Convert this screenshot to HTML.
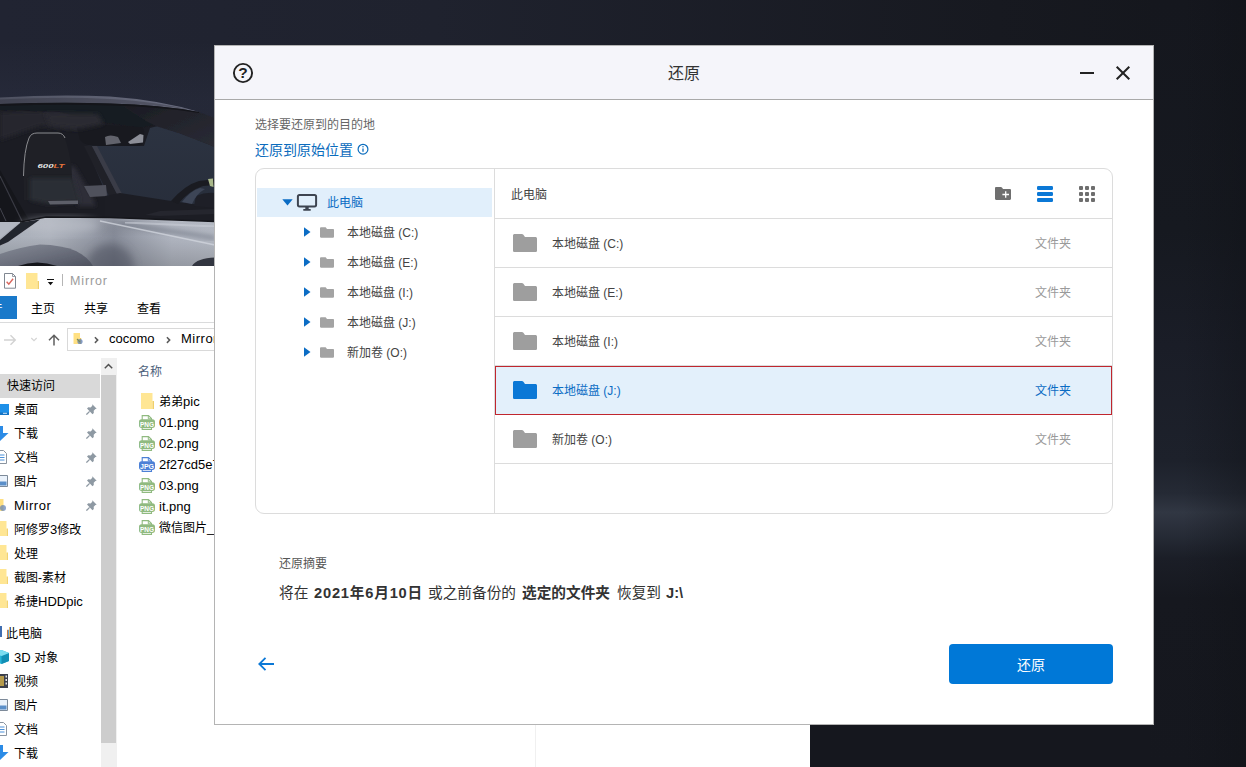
<!DOCTYPE html>
<html lang="zh-CN">
<head>
<meta charset="utf-8">
<title>还原</title>
<style>
*{box-sizing:border-box;margin:0;padding:0}
html,body{width:1246px;height:767px;overflow:hidden;background:#1b1e29}
body{position:relative;font-family:"Liberation Sans","Noto Sans CJK SC",sans-serif;color:#333}
.abs{position:absolute}
#bg{position:absolute;left:0;top:0;width:1246px;height:767px}
/* explorer */
#exp{position:absolute;left:0;top:266px;width:810px;height:501px;background:#fff;font-size:13px;color:#000}
#exp .t{position:absolute;white-space:nowrap;line-height:16px}
/* dialog */
#dlg{position:absolute;left:214px;top:45px;width:940px;height:680px;background:#fff}
#dlg::after{content:"";position:absolute;left:0;top:0;width:940px;height:680px;border:1px solid #b4b4b4;box-sizing:border-box;pointer-events:none}
#hdr{position:absolute;left:0;top:0;width:940px;height:55px;background:#f5f5fa;border-bottom:1px solid #a9a9a9}
#dlg .t{position:absolute;white-space:nowrap}
#panel{position:absolute;left:41px;top:123px;width:858px;height:346px;border:1px solid #dcdcdc;border-radius:9px;background:#fff;overflow:hidden}
#tree{position:absolute;left:0;top:0;width:239px;height:344px;border-right:1px solid #dcdcdc}
#list{position:absolute;left:239px;top:0;width:617px;height:344px}
.row{position:absolute;left:0;width:617px;height:49px;border-bottom:1px solid #dcdcdc}
.row .n{position:absolute;left:57px;top:17px;font-size:12px;line-height:16px;color:#444}
.row .k{position:absolute;left:540px;top:17px;font-size:12px;line-height:16px;color:#9a9a9a}
.row svg{position:absolute}
.row span svg,.tr span svg{display:block}
.tr{position:absolute;left:0;width:238px;height:30px}
.tr .n{position:absolute;left:91px;top:8px;font-size:12px;line-height:16px;color:#444;white-space:nowrap}
</style>
</head>
<body>
<svg id="bg" viewBox="0 0 1246 767">
<defs>
 <linearGradient id="gsky" x1="0" y1="0" x2="1" y2="0"><stop offset="0" stop-color="#212432"/><stop offset=".35" stop-color="#1f222e"/><stop offset=".8" stop-color="#171920"/><stop offset="1" stop-color="#14161c"/></linearGradient>
 <linearGradient id="gright" x1="0" y1="0" x2="0" y2="1"><stop offset="0" stop-color="#15171e"/><stop offset=".3" stop-color="#161920"/><stop offset=".45" stop-color="#1a1d27"/><stop offset=".6" stop-color="#1d212b"/><stop offset=".643" stop-color="#252a35"/><stop offset=".668" stop-color="#313743"/><stop offset=".698" stop-color="#262b36"/><stop offset=".728" stop-color="#1b1e27"/><stop offset=".78" stop-color="#16181f"/><stop offset="1" stop-color="#15171e"/></linearGradient>
 <linearGradient id="gskyv" x1="0" y1="0" x2="0" y2="1"><stop offset="0" stop-color="#8090c0" stop-opacity="0"/><stop offset=".15" stop-color="#8090c0" stop-opacity="0"/><stop offset=".38" stop-color="#8090c0" stop-opacity=".05"/><stop offset="1" stop-color="#8090c0" stop-opacity=".05"/></linearGradient>
 <linearGradient id="gredge" x1="0" y1="0" x2="1" y2="0"><stop offset="0" stop-color="#0f1116" stop-opacity="0"/><stop offset=".35" stop-color="#0f1116" stop-opacity="0"/><stop offset="1" stop-color="#0f1116" stop-opacity=".4"/></linearGradient>
 <linearGradient id="gbody" x1="0" y1="0" x2="1" y2="0"><stop offset="0" stop-color="#aab0ba"/><stop offset=".23" stop-color="#adb2bc"/><stop offset=".42" stop-color="#969ba7"/><stop offset=".53" stop-color="#868b98"/><stop offset=".64" stop-color="#9a9fab"/><stop offset=".8" stop-color="#b0b5c0"/><stop offset="1" stop-color="#b5bac4"/></linearGradient>
 <linearGradient id="gflare" x1="0" y1="0" x2="1" y2="1"><stop offset="0" stop-color="#858a96"/><stop offset=".5" stop-color="#6b6f7c"/><stop offset="1" stop-color="#4e525f"/></linearGradient>
 <linearGradient id="gbodyv" x1="0" y1="0" x2="0" y2="1"><stop offset="0" stop-color="#fff" stop-opacity=".1"/><stop offset=".4" stop-color="#000" stop-opacity="0"/><stop offset="1" stop-color="#000" stop-opacity=".16"/></linearGradient>
 <linearGradient id="groof" x1="0" y1="0" x2="1" y2="0"><stop offset="0" stop-color="#4e5160"/><stop offset=".5" stop-color="#5e6172"/><stop offset="1" stop-color="#6e7184"/></linearGradient>
 <linearGradient id="gpillar" x1="0" y1="0" x2="1" y2="1"><stop offset="0" stop-color="#1a1b22"/><stop offset=".5" stop-color="#23242c"/><stop offset="1" stop-color="#2a2b34"/></linearGradient>
 <linearGradient id="gglass" x1="0" y1="0" x2="0" y2="1"><stop offset="0" stop-color="#2c3341"/><stop offset="1" stop-color="#272d3a"/></linearGradient>
 <filter id="b1" x="-10%" y="-10%" width="120%" height="120%"><feGaussianBlur stdDeviation=".7"/></filter>
 <filter id="b2" x="-20%" y="-20%" width="140%" height="140%"><feGaussianBlur stdDeviation="2"/></filter>
 <filter id="b4" x="-30%" y="-30%" width="160%" height="160%"><feGaussianBlur stdDeviation="4"/></filter>
 <clipPath id="ccar"><rect x="0" y="0" width="215" height="266"/></clipPath>
</defs>
<rect width="1246" height="767" fill="url(#gsky)"/>
<rect x="1150" y="0" width="96" height="767" fill="url(#gright)"/>
<rect x="1150" y="0" width="96" height="767" fill="url(#gredge)"/>
<rect x="800" y="720" width="350" height="47" fill="#15171e"/>
<g clip-path="url(#ccar)">
 <!-- sky behind car -->
 <rect x="0" y="0" width="215" height="266" fill="url(#gskyv)"/>
 <!-- cabin dark mass -->
 <path d="M0 100 L110 100 L160 104 L200 113 L215 119 L215 230 L0 230Z" fill="#1b1c23"/>
 <!-- windshield glass -->
 <path d="M86 146 L100 145 L144 146 L150 128 L158 126 L182 134 L215 147 L215 222 L118 222 Z" fill="url(#gglass)"/>
 <!-- interior lighter patches -->
 <path d="M0 112 L60 110 L90 118 L78 130 L40 126 L0 140Z" fill="#25262e" filter="url(#b2)"/>
 <!-- roof liner dark -->
 <path d="M0 103 L110 103 L150 106 L175 112 L160 124 L140 128 L100 122 L60 112 L0 110Z" fill="#191a20" filter="url(#b1)"/>
 <!-- pillar / roof frame -->
 <path d="M120 104 L150 105 L180 108.500 L199 112 L215 118 L215 147 L180 133.500 L157 126.500 L146 121 Z" fill="url(#gpillar)" filter="url(#b1)"/>
 <!-- roof highlight band -->
 <path d="M0 97.500 Q60 94 110 96.500 Q160 100 199 112 Q160 104.500 110 103.500 Q60 102 0 104Z" fill="url(#groof)"/>
 <path d="M0 99.500 Q60 96.500 110 99 Q160 102 190 110 Q160 104.500 110 103.500 Q60 102 0 104Z" fill="#23242d" opacity=".3" filter="url(#b1)"/>
 <path d="M0 104 Q60 102 110 103.500 Q160 104.500 199 112 L199 113 Q160 106.500 110 105.500 Q60 104 0 106Z" fill="#14151a"/>
 <!-- mirror -->
 <path d="M77 128 Q78 124 84 124 L140 127 Q145 128 144 134 L143 143 Q142 146 137 146 L100 146 Q84 146 80 140Z" fill="#18191f"/>
 <path d="M105 137 Q110 134 118 137 L121 143 L106 145Z" fill="#62646c" filter="url(#b1)"/>
 <path d="M128 142 L140 134 L143.500 135 L143 142.500 L130 144Z" fill="#8d8f98" filter="url(#b1)"/>
 <!-- mirror stalk / A pillar inner -->
 <path d="M84 146 L92 146 L118 196 L110 198Z" fill="#202128"/>
 <path d="M92 146 L97 146 L122 194 L118 196Z" fill="#3a3c47"/>
 <path d="M45 113 L98 114 L104 124 L80 129 L50 126Z" fill="#2a2b33" filter="url(#b2)"/>
 <path d="M64 168 L74 166 L92 196 L96 206 L78 206 Z" fill="#2e2f38" filter="url(#b2)"/>
 <!-- headrest -->
 <path d="M24 200 L23.500 172 Q24 150 29 138 Q31 133 37 133 L58 133 Q63 133 65 138 Q72 160 72 178 L78 205 Z" fill="#1f2026"/>
 <path d="M23.500 176 Q24 150 29 138 Q31 133 37 133 L58 133 Q63 133 65 138" fill="none" stroke="#8b8c90" stroke-width="1"/>
 <!-- seat lower -->
 <path d="M30 178 L73 178 L80 202 L48 204 L30 200Z" fill="#2c2d36" filter="url(#b2)"/>
 <path d="M48 201 L78 200.500 L78 204 L50 204.500Z" fill="#5d5e69" filter="url(#b1)"/>
 <path d="M84 186 L106 185 L107 196 L90 197Z" fill="#50515c" filter="url(#b1)"/>
 <!-- left door dark + lines -->
 <path d="M0 170 L0 222 L30 222 Z" fill="#15161b"/>
 <path d="M0 176 L22 221" stroke="#3a3b44" stroke-width="1.200"/>
 <path d="M0 208 L6 221" stroke="#44454e" stroke-width="1"/>
 <!-- dashboard -->
 <path d="M105 196 L120 193 L171 201 L215 207 L215 222 L105 218Z" fill="#1c1d24"/>
 <path d="M171 201 Q185 185 199 181 L212 179.500 L215 180 L215 185 L203 186 Q190 190 178 204Z" fill="#1a1b21"/>
 <path d="M196 196 Q205 192 215 193 L215 208 L194 206Z" fill="#1e1f27"/>
 <path d="M182 202 Q190 191 200 188 L205 189 Q196 194 192 204Z" fill="#3d4556" filter="url(#b1)"/>
 <path d="M208 179 L213 178.500 L213.500 187 L210 186Z" fill="#a9b88a" filter="url(#b1)"/>
 <path d="M145 215 L160 211 L215 209 L215 214 L160 216Z" fill="#25262e"/>
 <!-- body -->
 <path d="M0 222 L20 222 L46 217 L110 217.500 L215 221.500 L215 266 L0 266Z" fill="url(#gbody)"/>
 <path d="M0 222 L20 222 L46 217 L110 217.500 L215 221.500 L215 266 L0 266Z" fill="url(#gbodyv)"/>
 <ellipse cx="110" cy="268" rx="24" ry="24" fill="#4a4e5b" opacity=".5" filter="url(#b4)"/>
 <ellipse cx="60" cy="226" rx="40" ry="8" fill="#c3c7d0" opacity=".55" filter="url(#b4)"/>
 <!-- bright left corner -->
 <path d="M0 222 L20 222 L0 238Z" fill="#b3b8c2"/>
 <!-- intake dark stripe -->
 <path d="M21 222.300 L40 219.500 L28 228 L8 242 L0 245.500 L0 240Z" fill="#23252d" filter="url(#b1)"/>
 <!-- crease highlight lines -->
 <path d="M120 224 L215 238" stroke="#767b88" stroke-width="5" opacity=".6" filter="url(#b2)"/>
 <path d="M100 221 L215 245" stroke="#d3d7df" stroke-width="1.400" opacity=".75" filter="url(#b1)"/>
 <path d="M125 222.500 L215 226.500" stroke="#c9cdd6" stroke-width="2" opacity=".6" filter="url(#b1)"/>
 <!-- fender flare shading -->
 <path d="M0 254 Q20 247 40 244.500 Q62 245 76 251 Q88 257 93 266 L0 266Z" fill="url(#gflare)" filter="url(#b1)"/>
 <path d="M18 266 Q37 259 57 266Z" fill="#14151a"/>
 <path d="M192 266 Q197 258 215 257.500 L215 266Z" fill="#33363f" filter="url(#b1)"/>
 <!-- top body shadow line -->
 <path d="M20 222 L46 217 L110 217.500 L215 221.500" fill="none" stroke="#15161b" stroke-width="1.600"/>
 <text x="37.500" y="168.300" font-family="Liberation Sans, sans-serif" font-size="5.800" font-weight="bold" font-style="italic" fill="#e8e8e8" textLength="27" lengthAdjust="spacingAndGlyphs">600<tspan fill="#e8743a">LT</tspan></text>
</g>
</svg>

<div id="exp">
 <svg class="abs" style="left:4px;top:7px" width="12" height="16" viewBox="0 0 12 16"><path d="M.500.500h8l3 3v11.700H.500z" fill="#fff" stroke="#808791" stroke-width="1"/><path d="M8.500.500v3h3" fill="none" stroke="#808791" stroke-width=".8"/><path d="M2.600 8.800l2.200 2.300 4.300-5.300" fill="none" stroke="#d9675e" stroke-width="1.400"/></svg>
 <svg class="abs" style="left:26px;top:7px" width="13" height="16" viewBox="0 0 13 16"><path d="M0 0h11.500v16H0z" fill="#ffe694"/><path d="M11.500 8H13v8h-1.500z" fill="#f0cf6a"/></svg>
 <svg class="abs" style="left:47px;top:12px" width="7" height="8" viewBox="0 0 7 8"><path d="M0 1h7v1.100H0zM.800 4h5.400L3.500 7.200z" fill="#111"/></svg>
 <div class="abs" style="left:62px;top:8px;width:1px;height:12px;background:#b5b5b5"></div>
 <div class="t" style="left:70px;top:7px;font-size:12.500px;letter-spacing:.85px;color:#9b9b9b">Mirror</div>
 <div class="abs" style="left:0;top:30px;width:17px;height:23px;background:#1979ca;overflow:hidden"><span class="t" style="left:-9.500px;top:4px;font-size:12px;color:#fff">件</span></div>
 <div class="t" style="left:31px;top:35px;font-size:12px">主页</div>
 <div class="t" style="left:84px;top:35px;font-size:12px">共享</div>
 <div class="t" style="left:137px;top:35px;font-size:12px">查看</div>
 <div class="abs" style="left:0;top:56px;width:810px;height:1px;background:#dadbdc"></div>
 <svg class="abs" style="left:3px;top:68px" width="14" height="12" viewBox="0 0 14 12"><path d="M1 6h11M7.500 1.200L12.300 6l-4.800 4.800" fill="none" stroke="#d2d2d2" stroke-width="1.400"/></svg>
 <svg class="abs" style="left:30px;top:71px" width="8" height="5" viewBox="0 0 8 5"><path d="M1.300 1L4 3.600 6.700 1" fill="none" stroke="#d4d4d4" stroke-width="1.200"/></svg>
 <svg class="abs" style="left:48px;top:68px" width="12" height="12" viewBox="0 0 12 12"><path d="M6 11.500V1.500M1 6.300L6 1.300l5 5" fill="none" stroke="#5f5f5f" stroke-width="1.500"/></svg>
 <div class="abs" style="left:67px;top:62px;width:743px;height:23px;border:1px solid #d9d9d9;background:#fff"></div>
 <svg class="abs" style="left:73px;top:67px" width="11" height="12" viewBox="0 0 11 12"><path d="M0.500 0H7v11H0.500z" fill="#ffe082"/><path d="M7 5h1.200v6H7z" fill="#e8c558"/><circle cx="7" cy="8.500" r="2.600" fill="#5d7fb8" opacity=".75"/><path d="M4 6l3 3" stroke="#7a8a5a" stroke-width="1.200"/></svg>
 <svg class="abs" style="left:94px;top:70px" width="5" height="8" viewBox="0 0 5 8"><path d="M.9 1.300L3.700 4.100.9 6.900" fill="none" stroke="#5a5a5a" stroke-width="1.500"/></svg>
 <div class="t" style="left:109px;top:65px;font-size:13px">cocomo</div>
 <svg class="abs" style="left:166px;top:70px" width="5" height="8" viewBox="0 0 5 8"><path d="M.9 1.300L3.700 4.100.9 6.900" fill="none" stroke="#5a5a5a" stroke-width="1.500"/></svg>
 <div class="t" style="left:181px;top:65px;font-size:13px;letter-spacing:.5px">Mirror</div>
 <div class="abs" style="left:0;top:108px;width:100px;height:24px;background:#d9d9d9"></div>
 <div class="abs" style="left:101px;top:92px;width:16px;height:409px;background:#f0f0f0"></div>
 <div class="abs" style="left:101px;top:109px;width:15px;height:368px;background:#cdcdcd"></div>
 <svg class="abs" style="left:104px;top:97px" width="9" height="6" viewBox="0 0 9 6"><path d="M.8 5.200L4.500 1.500 8.200 5.200" fill="none" stroke="#505050" stroke-width="1.500"/></svg>
 <div class="t" style="left:7px;top:112px;font-size:12px">快速访问</div>
 <div class="t" style="left:14px;top:136px;font-size:12px">桌面</div>
 <svg class="abs" style="left:86px;top:138px" width="11" height="11" viewBox="0 0 11 11"><path d="M6.300 0.300l4.400 4.400-1.300.300-1.700 1.700.100 2.300-1.300 1.300L1 4.600l1.300-1.300 2.300.100 1.700-1.700z" fill="#8e99a3"/><path d="M3.600 7.400L0.400 10.600" stroke="#8e99a3" stroke-width="1.300"/></svg>
 <div class="t" style="left:14px;top:160px;font-size:12px">下载</div>
 <svg class="abs" style="left:86px;top:162px" width="11" height="11" viewBox="0 0 11 11"><path d="M6.300 0.300l4.400 4.400-1.300.300-1.700 1.700.100 2.300-1.300 1.300L1 4.600l1.300-1.300 2.300.100 1.700-1.700z" fill="#8e99a3"/><path d="M3.600 7.400L0.400 10.600" stroke="#8e99a3" stroke-width="1.300"/></svg>
 <div class="t" style="left:14px;top:184px;font-size:12px">文档</div>
 <svg class="abs" style="left:86px;top:186px" width="11" height="11" viewBox="0 0 11 11"><path d="M6.300 0.300l4.400 4.400-1.300.300-1.700 1.700.100 2.300-1.300 1.300L1 4.600l1.300-1.300 2.300.100 1.700-1.700z" fill="#8e99a3"/><path d="M3.600 7.400L0.400 10.600" stroke="#8e99a3" stroke-width="1.300"/></svg>
 <div class="t" style="left:14px;top:208px;font-size:12px">图片</div>
 <svg class="abs" style="left:86px;top:210px" width="11" height="11" viewBox="0 0 11 11"><path d="M6.300 0.300l4.400 4.400-1.300.300-1.700 1.700.100 2.300-1.300 1.300L1 4.600l1.300-1.300 2.300.100 1.700-1.700z" fill="#8e99a3"/><path d="M3.600 7.400L0.400 10.600" stroke="#8e99a3" stroke-width="1.300"/></svg>
 <div class="t" style="left:14px;top:232px;font-size:13px;letter-spacing:.6px">Mirror</div>
 <svg class="abs" style="left:86px;top:234px" width="11" height="11" viewBox="0 0 11 11"><path d="M6.300 0.300l4.400 4.400-1.300.300-1.700 1.700.100 2.300-1.300 1.300L1 4.600l1.300-1.300 2.300.100 1.700-1.700z" fill="#8e99a3"/><path d="M3.600 7.400L0.400 10.600" stroke="#8e99a3" stroke-width="1.300"/></svg>
 <div class="t" style="left:14px;top:256px;font-size:12px">阿修罗<span style="font-size:13px">3</span>修改</div>
 <div class="t" style="left:14px;top:280px;font-size:12px">处理</div>
 <div class="t" style="left:14px;top:304px;font-size:12px">截图-素材</div>
 <div class="t" style="left:14px;top:328px;font-size:12px">希捷<span style="font-size:13px">HDDpic</span></div>
 <svg class="abs" style="left:0;top:138px" width="9" height="11" viewBox="0 0 9 11"><path d="M-4 0h13v11H-4z" fill="#1e90e8"/><path d="M-4 8.500h13v2.500H-4z" fill="#1574c4"/><path d="M3 9.300h4" stroke="#cfe6fb" stroke-width="1"/></svg>
 <svg class="abs" style="left:0;top:160px" width="9" height="15" viewBox="0 0 9 15"><path d="M-3 0h6v7h5.500L0 15-8.500 7H-3z" fill="#2b8be6"/></svg>
 <svg class="abs" style="left:-1px;top:184px" width="8" height="14" viewBox="0 0 8 14"><path d="M-4 .5h8.500l3 3v10H-4z" fill="#fff" stroke="#8a94a0"/><path d="M0 5h5.500M0 7.500h5.500M0 10h5.500" stroke="#4a90d9" stroke-width="1"/></svg>
 <svg class="abs" style="left:-1px;top:209px" width="9" height="12" viewBox="0 0 9 12"><path d="M-5 .5h13.500v11H-5z" fill="#eaf2fb" stroke="#7d8a99"/><path d="M-4 6.500h11.500v4H-4z" fill="#5b8fc9"/></svg>
 <svg class="abs" style="left:-1px;top:233px" width="8" height="13" viewBox="0 0 8 13"><path d="M-5 0h9.500v12H-5z" fill="#ffe082"/><circle cx="4" cy="9" r="3" fill="#5d7fb8" opacity=".7"/></svg>
 <svg class="abs" style="left:0px;top:255px" width="8" height="15" viewBox="0 0 8 15"><path d="M-6 0H6.5V15H-6z" fill="#ffe694"/><path d="M6.5 7.500h1.500V15H6.5z" fill="#f3d36f"/></svg>
 <svg class="abs" style="left:0px;top:279px" width="8" height="15" viewBox="0 0 8 15"><path d="M-6 0H6.5V15H-6z" fill="#ffe694"/><path d="M6.5 7.500h1.500V15H6.5z" fill="#f3d36f"/></svg>
 <svg class="abs" style="left:0px;top:303px" width="8" height="15" viewBox="0 0 8 15"><path d="M-6 0H6.5V15H-6z" fill="#ffe694"/><path d="M6.5 7.500h1.500V15H6.5z" fill="#f3d36f"/></svg>
 <svg class="abs" style="left:0px;top:327px" width="8" height="15" viewBox="0 0 8 15"><path d="M-6 0H6.5V15H-6z" fill="#ffe694"/><path d="M6.5 7.500h1.500V15H6.5z" fill="#f3d36f"/></svg>
 <div class="abs" style="left:0;top:360px;width:2px;height:11px;background:#3f6db0"></div>
 <div class="t" style="left:6px;top:360px;font-size:12px">此电脑</div>
 <div class="t" style="left:14px;top:384px;font-size:12px"><span style="font-size:13px">3D </span>对象</div>
 <div class="t" style="left:14px;top:408px;font-size:12px">视频</div>
 <div class="t" style="left:14px;top:432px;font-size:12px">图片</div>
 <div class="t" style="left:14px;top:456px;font-size:12px">文档</div>
 <div class="t" style="left:14px;top:480px;font-size:12px">下载</div>
 <svg class="abs" style="left:0;top:384px" width="9" height="14" viewBox="0 0 9 14"><path d="M-6 3L1.500 0 9 3v8L1.500 14-6 11z" fill="#27b4d8"/><path d="M1.500 6L9 3v8l-7.500 3z" fill="#128fb5"/><path d="M-6 3l7.500 3L9 3 1.500 0z" fill="#7bdcf0"/></svg>
 <svg class="abs" style="left:0;top:408px" width="8" height="14" viewBox="0 0 8 14"><path d="M-5 0h13v14H-5z" fill="#3b3f4a"/><path d="M-3 2h7v10h-7z" fill="#b59a4a"/><path d="M5.500 1.500h1.500v2H5.500zM5.500 5h1.500v2H5.500zM5.500 8.500h1.500v2H5.500z" fill="#e8e8e8"/></svg>
 <svg class="abs" style="left:-1px;top:433px" width="9" height="12" viewBox="0 0 9 12"><path d="M-5 .5h13.500v11H-5z" fill="#eaf2fb" stroke="#7d8a99"/><path d="M-4 6.500h11.500v4H-4z" fill="#5b8fc9"/></svg>
 <svg class="abs" style="left:-1px;top:456px" width="8" height="14" viewBox="0 0 8 14"><path d="M-4 .5h8.500l3 3v10H-4z" fill="#fff" stroke="#8a94a0"/><path d="M0 5h5.500M0 7.500h5.500M0 10h5.500" stroke="#4a90d9" stroke-width="1"/></svg>
 <svg class="abs" style="left:0;top:479px" width="9" height="15" viewBox="0 0 9 15"><path d="M-3 0h6v7h5.500L0 15-8.500 7H-3z" fill="#2b8be6"/></svg>
 <div class="t" style="left:138px;top:98px;font-size:12px;color:#4c607a">名称</div>
 <svg class="abs" style="left:141px;top:127px" width="13" height="16" viewBox="0 0 13 16"><path d="M0 0h11.500v16H0z" fill="#ffe694"/><path d="M11.500 8H13v8h-1.500z" fill="#f0cf6a"/></svg>
 <div class="t" style="left:159px;top:128px;font-size:12px">弟弟<span style="font-size:13px">pic</span></div>
 <div class="t" style="left:159px;top:149px;font-size:13px">01.png</div>
 <svg class="abs" style="left:139px;top:149px" width="16" height="15" viewBox="0 0 16 15"><path d="M3.200 .600h6.300l3 3V14.400H3.200z" fill="#fff" stroke="#90ba80" stroke-width="1.100"/><path d="M9.300 .800v3h3" fill="none" stroke="#90ba80" stroke-width="1"/><rect x="0" y="4.300" width="16" height="8.600" rx="2.600" fill="#90ba80"/><text x="8" y="11.600" text-anchor="middle" font-family="Liberation Sans, sans-serif" font-weight="bold" font-size="8" fill="#fff" textLength="14" lengthAdjust="spacingAndGlyphs">PNG</text></svg>
 <div class="t" style="left:159px;top:170px;font-size:13px">02.png</div>
 <svg class="abs" style="left:139px;top:170px" width="16" height="15" viewBox="0 0 16 15"><path d="M3.200 .600h6.300l3 3V14.400H3.200z" fill="#fff" stroke="#90ba80" stroke-width="1.100"/><path d="M9.300 .800v3h3" fill="none" stroke="#90ba80" stroke-width="1"/><rect x="0" y="4.300" width="16" height="8.600" rx="2.600" fill="#90ba80"/><text x="8" y="11.600" text-anchor="middle" font-family="Liberation Sans, sans-serif" font-weight="bold" font-size="8" fill="#fff" textLength="14" lengthAdjust="spacingAndGlyphs">PNG</text></svg>
 <div class="t" style="left:159px;top:191px;font-size:13px">2f27cd5e7</div>
 <svg class="abs" style="left:139px;top:191px" width="16" height="15" viewBox="0 0 16 15"><path d="M3.200 .600h6.300l3 3V14.400H3.200z" fill="#fff" stroke="#4c80d6" stroke-width="1.100"/><path d="M9.300 .800v3h3" fill="none" stroke="#4c80d6" stroke-width="1"/><rect x="0" y="4.300" width="16" height="8.600" rx="2.600" fill="#4c80d6"/><text x="8" y="11.600" text-anchor="middle" font-family="Liberation Sans, sans-serif" font-weight="bold" font-size="8" fill="#fff" textLength="14" lengthAdjust="spacingAndGlyphs">JPG</text></svg>
 <div class="t" style="left:159px;top:212px;font-size:13px">03.png</div>
 <svg class="abs" style="left:139px;top:212px" width="16" height="15" viewBox="0 0 16 15"><path d="M3.200 .600h6.300l3 3V14.400H3.200z" fill="#fff" stroke="#90ba80" stroke-width="1.100"/><path d="M9.300 .800v3h3" fill="none" stroke="#90ba80" stroke-width="1"/><rect x="0" y="4.300" width="16" height="8.600" rx="2.600" fill="#90ba80"/><text x="8" y="11.600" text-anchor="middle" font-family="Liberation Sans, sans-serif" font-weight="bold" font-size="8" fill="#fff" textLength="14" lengthAdjust="spacingAndGlyphs">PNG</text></svg>
 <div class="t" style="left:159px;top:233px;font-size:13px">it.png</div>
 <svg class="abs" style="left:139px;top:233px" width="16" height="15" viewBox="0 0 16 15"><path d="M3.200 .600h6.300l3 3V14.400H3.200z" fill="#fff" stroke="#90ba80" stroke-width="1.100"/><path d="M9.300 .800v3h3" fill="none" stroke="#90ba80" stroke-width="1"/><rect x="0" y="4.300" width="16" height="8.600" rx="2.600" fill="#90ba80"/><text x="8" y="11.600" text-anchor="middle" font-family="Liberation Sans, sans-serif" font-weight="bold" font-size="8" fill="#fff" textLength="14" lengthAdjust="spacingAndGlyphs">PNG</text></svg>
 <div class="t" style="left:159px;top:254px;font-size:12px">微信图片<span style="font-size:13px">_2</span></div>
 <svg class="abs" style="left:139px;top:254px" width="16" height="15" viewBox="0 0 16 15"><path d="M3.200 .600h6.300l3 3V14.400H3.200z" fill="#fff" stroke="#90ba80" stroke-width="1.100"/><path d="M9.300 .800v3h3" fill="none" stroke="#90ba80" stroke-width="1"/><rect x="0" y="4.300" width="16" height="8.600" rx="2.600" fill="#90ba80"/><text x="8" y="11.600" text-anchor="middle" font-family="Liberation Sans, sans-serif" font-weight="bold" font-size="8" fill="#fff" textLength="14" lengthAdjust="spacingAndGlyphs">PNG</text></svg>
 <div class="abs" style="left:535px;top:92px;width:1px;height:409px;background:#f0f0f0"></div>
</div>

<div id="dlg">
 <div id="hdr"></div>
 <svg class="abs" style="left:18px;top:17px" width="22" height="22" viewBox="0 0 22 22"><circle cx="11" cy="11" r="9.100" fill="none" stroke="#222" stroke-width="1.900"/><text x="11" y="16.300" text-anchor="middle" font-family="Liberation Sans, sans-serif" font-weight="bold" font-size="15.500" fill="#222">?</text></svg>
 <svg class="abs" style="left:865px;top:20px" width="16" height="16" viewBox="0 0 16 16"><path d="M1 8h14" stroke="#222" stroke-width="2"/></svg>
 <svg class="abs" style="left:901px;top:20px" width="16" height="16" viewBox="0 0 16 16"><path d="M1.700 1.700l12.600 12.600M14.300 1.700L1.700 14.300" stroke="#222" stroke-width="2"/></svg>
 <div class="t" style="left:454px;top:18px;font-size:16px;line-height:22px;color:#333">还原</div>
 <div class="t" style="left:41px;top:72px;font-size:12px;line-height:16px;color:#666">选择要还原到的目的地</div>
 <div class="t" style="left:41px;top:96px;font-size:14px;line-height:18px;color:#0b6cbd">还原到原始位置</div>
 <svg class="abs" style="left:142px;top:97px" width="14" height="14" viewBox="0 0 14 14"><circle cx="7" cy="7.200" r="4.900" fill="none" stroke="#0b6cbd" stroke-width="1.200"/><path d="M7 6.400v3.300" stroke="#0b6cbd" stroke-width="1.300"/><circle cx="7" cy="4.800" r=".75" fill="#0b6cbd"/></svg>
 <div id="panel">
  <div id="tree">
   <div class="tr" style="top:19px;left:1px;width:235px;height:29px;background:#e1effb"><svg class="abs" style="left:25px;top:11px" width="11" height="7" viewBox="0 0 11 7"><path d="M0.300 0.300h10.400L5.500 6.500z" fill="#0b6cc4"/></svg><svg class="abs" style="left:39px;top:6px" width="22" height="18" viewBox="0 0 22 18"><rect x="1.900" y="1" width="18.200" height="11.400" rx="1.600" fill="none" stroke="#3d4450" stroke-width="2"/><path d="M9.300 13h3.400v2.200H9.300z M7.300 15h7.400v1.800H7.300z" fill="#3d4450"/></svg><span class="n" style="left:70px;top:7px;color:#0b6cc4">此电脑</span></div>
   <div class="tr" style="top:48px"><svg class="abs" style="left:48px;top:10px" width="7" height="10" viewBox="0 0 7 10"><path d="M0 0.200L6.500 5 0 9.800z" fill="#0b6cc4"/></svg><span class="abs" style="left:64px;top:10px;width:14px;height:11px"><svg width="14" height="11" viewBox="0 0 24 18"><path d="M1.6 0h7.2c.7 0 1.2.3 1.6.8L12 3h10.4c.9 0 1.6.7 1.6 1.6v11.8c0 .9-.7 1.6-1.6 1.6H1.6C.7 18 0 17.300 0 16.400V1.6C0 .7.7 0 1.600 0z" fill="#a3a3a3"/></svg></span><span class="n">本地磁盘 (C:)</span></div>
   <div class="tr" style="top:78px"><svg class="abs" style="left:48px;top:10px" width="7" height="10" viewBox="0 0 7 10"><path d="M0 0.200L6.500 5 0 9.800z" fill="#0b6cc4"/></svg><span class="abs" style="left:64px;top:10px;width:14px;height:11px"><svg width="14" height="11" viewBox="0 0 24 18"><path d="M1.6 0h7.2c.7 0 1.2.3 1.6.8L12 3h10.4c.9 0 1.6.7 1.6 1.6v11.8c0 .9-.7 1.6-1.6 1.6H1.6C.7 18 0 17.300 0 16.400V1.6C0 .7.7 0 1.600 0z" fill="#a3a3a3"/></svg></span><span class="n">本地磁盘 (E:)</span></div>
   <div class="tr" style="top:108px"><svg class="abs" style="left:48px;top:10px" width="7" height="10" viewBox="0 0 7 10"><path d="M0 0.200L6.500 5 0 9.800z" fill="#0b6cc4"/></svg><span class="abs" style="left:64px;top:10px;width:14px;height:11px"><svg width="14" height="11" viewBox="0 0 24 18"><path d="M1.6 0h7.2c.7 0 1.2.3 1.6.8L12 3h10.4c.9 0 1.6.7 1.6 1.6v11.8c0 .9-.7 1.6-1.6 1.6H1.6C.7 18 0 17.300 0 16.400V1.6C0 .7.7 0 1.600 0z" fill="#a3a3a3"/></svg></span><span class="n">本地磁盘 (I:)</span></div>
   <div class="tr" style="top:138px"><svg class="abs" style="left:48px;top:10px" width="7" height="10" viewBox="0 0 7 10"><path d="M0 0.200L6.500 5 0 9.800z" fill="#0b6cc4"/></svg><span class="abs" style="left:64px;top:10px;width:14px;height:11px"><svg width="14" height="11" viewBox="0 0 24 18"><path d="M1.6 0h7.2c.7 0 1.2.3 1.6.8L12 3h10.4c.9 0 1.6.7 1.6 1.6v11.8c0 .9-.7 1.6-1.6 1.6H1.6C.7 18 0 17.300 0 16.400V1.6C0 .7.7 0 1.600 0z" fill="#a3a3a3"/></svg></span><span class="n">本地磁盘 (J:)</span></div>
   <div class="tr" style="top:168px"><svg class="abs" style="left:48px;top:10px" width="7" height="10" viewBox="0 0 7 10"><path d="M0 0.200L6.500 5 0 9.800z" fill="#0b6cc4"/></svg><span class="abs" style="left:64px;top:10px;width:14px;height:11px"><svg width="14" height="11" viewBox="0 0 24 18"><path d="M1.6 0h7.2c.7 0 1.2.3 1.6.8L12 3h10.4c.9 0 1.6.7 1.6 1.6v11.8c0 .9-.7 1.6-1.6 1.6H1.6C.7 18 0 17.300 0 16.400V1.6C0 .7.7 0 1.600 0z" fill="#a3a3a3"/></svg></span><span class="n">新加卷 (O:)</span></div>
  </div>
  <div id="list">
   <div class="row" style="top:0;height:50px"><span class="n" style="left:16px;top:18px;color:#444">此电脑</span><svg style="left:500px;top:18px" width="16" height="13" viewBox="0 0 16 13"><path d="M1.200 0h4.600c.5 0 .9.200 1.200.600L8 2h6.800c.7 0 1.200.5 1.200 1.200v8.600c0 .7-.5 1.200-1.200 1.200H1.200C.5 13 0 12.500 0 11.800V1.200C0 .5.500 0 1.200 0z" fill="#6f6f6f"/><path d="M10.700 4.200v6.600M7.400 7.500h6.600" stroke="#fff" stroke-width="1.300"/></svg><svg style="left:542px;top:17px" width="16" height="16" viewBox="0 0 16 16"><rect x="0" y="0" width="16" height="4" rx="1.200" fill="#0b78d6"/><rect x="0" y="6" width="16" height="4" rx="1.200" fill="#0b78d6"/><rect x="0" y="12" width="16" height="4" rx="1.200" fill="#0b78d6"/></svg><svg style="left:584px;top:17px" width="16" height="16" viewBox="0 0 16 16"><g fill="#6e6e6e"><rect x="0" y="0" width="4" height="4" rx="1"/><rect x="6" y="0" width="4" height="4" rx="1"/><rect x="12" y="0" width="4" height="4" rx="1"/><rect x="0" y="6" width="4" height="4" rx="1"/><rect x="6" y="6" width="4" height="4" rx="1"/><rect x="12" y="6" width="4" height="4" rx="1"/><rect x="0" y="12" width="4" height="4" rx="1"/><rect x="6" y="12" width="4" height="4" rx="1"/><rect x="12" y="12" width="4" height="4" rx="1"/></g></svg></div>
   <div class="row" style="top:50px"><span class="abs" style="left:18px;top:15px"><svg width="24" height="18" viewBox="0 0 24 18"><path d="M1.6 0h7.2c.7 0 1.2.3 1.6.8L12 3h10.4c.9 0 1.6.7 1.6 1.6v11.8c0 .9-.7 1.6-1.6 1.6H1.6C.7 18 0 17.300 0 16.400V1.6C0 .7.7 0 1.600 0z" fill="#9e9e9e"/></svg></span><span class="n">本地磁盘 (C:)</span><span class="k">文件夹</span></div>
   <div class="row" style="top:99px"><span class="abs" style="left:18px;top:15px"><svg width="24" height="18" viewBox="0 0 24 18"><path d="M1.6 0h7.2c.7 0 1.2.3 1.6.8L12 3h10.4c.9 0 1.6.7 1.6 1.6v11.8c0 .9-.7 1.6-1.6 1.6H1.6C.7 18 0 17.300 0 16.400V1.6C0 .7.7 0 1.600 0z" fill="#9e9e9e"/></svg></span><span class="n">本地磁盘 (E:)</span><span class="k">文件夹</span></div>
   <div class="row" style="top:148px"><span class="abs" style="left:18px;top:15px"><svg width="24" height="18" viewBox="0 0 24 18"><path d="M1.6 0h7.2c.7 0 1.2.3 1.6.8L12 3h10.4c.9 0 1.6.7 1.6 1.6v11.8c0 .9-.7 1.6-1.6 1.6H1.6C.7 18 0 17.300 0 16.400V1.6C0 .7.7 0 1.600 0z" fill="#9e9e9e"/></svg></span><span class="n">本地磁盘 (I:)</span><span class="k">文件夹</span></div>
   <div class="row" style="top:197px;height:49px;background:#e3f0fb;border:1px solid #c0262e;"><span class="abs" style="left:17px;top:14px"><svg width="24" height="18" viewBox="0 0 24 18"><path d="M1.6 0h7.2c.7 0 1.2.3 1.6.8L12 3h10.4c.9 0 1.6.7 1.6 1.6v11.8c0 .9-.7 1.6-1.6 1.6H1.6C.7 18 0 17.300 0 16.400V1.6C0 .7.7 0 1.600 0z" fill="#0b78d6"/></svg></span><span class="n" style="left:56px;top:16px;color:#0b6cc4;">本地磁盘 (J:)</span><span class="k" style="left:539px;top:16px;color:#0b6cc4;">文件夹</span></div>
   <div class="row" style="top:246px"><span class="abs" style="left:18px;top:15px"><svg width="24" height="18" viewBox="0 0 24 18"><path d="M1.6 0h7.2c.7 0 1.2.3 1.6.8L12 3h10.4c.9 0 1.6.7 1.6 1.6v11.8c0 .9-.7 1.6-1.6 1.6H1.6C.7 18 0 17.300 0 16.400V1.6C0 .7.7 0 1.600 0z" fill="#9e9e9e"/></svg></span><span class="n">新加卷 (O:)</span><span class="k">文件夹</span></div>
  </div>
 </div>
 <div class="t" style="left:65px;top:511px;font-size:12px;line-height:16px;color:#555">还原摘要</div>
 <div class="t" style="left:65px;top:538px;font-size:14.667px;line-height:20px;color:#333;width:420px;height:20px"><span class="abs" style="left:0">将在</span><b class="abs" style="left:35px;letter-spacing:.8px">2021年6月10日</b><span class="abs" style="left:149px">或之前备份的</span><b class="abs" style="left:243px">选定的文件夹</b><span class="abs" style="left:338px">恢复到</span><b class="abs" style="left:387px">J:\</b></div>
 <svg class="abs" style="left:43px;top:611px" width="18" height="16" viewBox="0 0 18 16"><path d="M17 8H2.500M8.500 1.800L2.300 8l6.200 6.200" fill="none" stroke="#0b78d6" stroke-width="1.800"/></svg>
 <div class="abs" style="left:735px;top:599px;width:164px;height:40px;background:#0078d7;border-radius:4px;color:#fff;font-size:14px;line-height:42px;text-align:center">还原</div>
</div>
</body>
</html>
